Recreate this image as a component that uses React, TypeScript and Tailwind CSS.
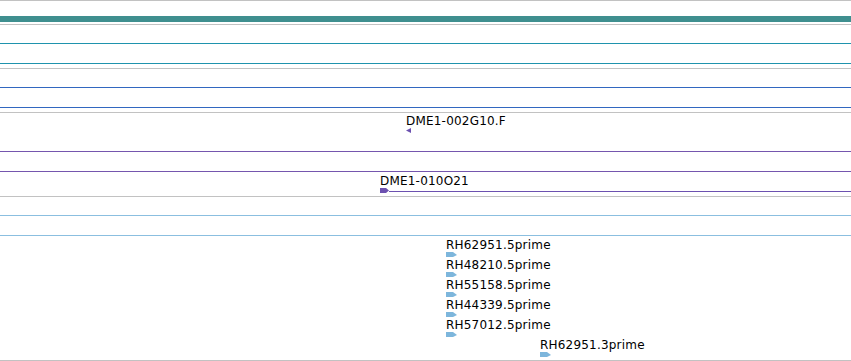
export default function App() {
  const rhRows = [
    { name: "RH62951.5prime", x: 446 },
    { name: "RH48210.5prime", x: 446 },
    { name: "RH55158.5prime", x: 446 },
    { name: "RH44339.5prime", x: 446 },
    { name: "RH57012.5prime", x: 446 },
    { name: "RH62951.3prime", x: 540 },
  ];

  return (
    <div
      className="w-[851px] h-[361px] bg-white overflow-hidden text-[12px] text-black tracking-[0.2px]"
      style={{ fontFamily: '"DejaVu Sans", sans-serif' }}
    >
      {/* Top ruler edge */}
      <div className="h-px bg-[#c2c2c2]" />

      {/* Overview band */}
      <div className="h-[23px] pt-[15px]">
        <div className="h-[6px] bg-[#3f8f8f]" />
      </div>
      <div className="h-px bg-[#c2c2c2]" />

      {/* Track: teal features */}
      <div className="h-[18px]" />
      <div className="h-px bg-[#1f93ad]" />
      <div className="h-[19px]" />
      <div className="h-px bg-[#1f93ad]" />
      <div className="h-[4px]" />
      <div className="h-px bg-[#c2c2c2]" />

      {/* Track: blue features */}
      <div className="h-[18px]" />
      <div className="h-px bg-[#3267c0]" />
      <div className="h-[19px]" />
      <div className="h-px bg-[#3267c0]" />
      <div className="h-[4px]" />
      <div className="h-px bg-[#c2c2c2]" />

      {/* Track: DME1 clones */}
      <div className="h-[38px] pl-[406px] pt-[2px]">
        <div className="leading-[13px] whitespace-nowrap">DME1-002G10.F</div>
        <svg width="5" height="5" className="block">
          <polygon points="0,2.5 5,0 5,5" fill="#6c51b0" />
        </svg>
      </div>
      <div className="h-px bg-[#7556ae]" />
      <div className="h-[19px]" />
      <div className="h-px bg-[#7556ae]" />
      <div className="h-[24px] pl-[380px] pt-[3px]">
        <div className="leading-[13px] whitespace-nowrap">DME1-010O21</div>
        <div className="flex items-center h-[5px]">
          <svg width="9" height="5" className="block shrink-0">
            <polygon points="0,0 6,0 9,2.5 6,5 0,5" fill="#6c51b0" />
          </svg>
          <div className="flex-1 h-px bg-[#6c51b0] mt-[1px]" />
        </div>
      </div>
      <div className="h-px bg-[#c2c2c2]" />

      {/* Track: RH ESTs */}
      <div className="h-[18px]" />
      <div className="h-px bg-[#8bbfe0]" />
      <div className="h-[19px]" />
      <div className="h-px bg-[#8bbfe0]" />
      <div className="h-[124px] pt-[3px]">
        {rhRows.map((r, i) => (
          <div key={i} className="h-[20px]" style={{ paddingLeft: r.x }}>
            <div className="leading-[13px] whitespace-nowrap">{r.name}</div>
            <svg width="11" height="5" className="block">
              <polygon points="0,0 7,0 11,3 7,5 0,5" fill="#7db6dc" />
            </svg>
          </div>
        ))}
      </div>
      <div className="h-px bg-[#c2c2c2]" />
    </div>
  );
}
